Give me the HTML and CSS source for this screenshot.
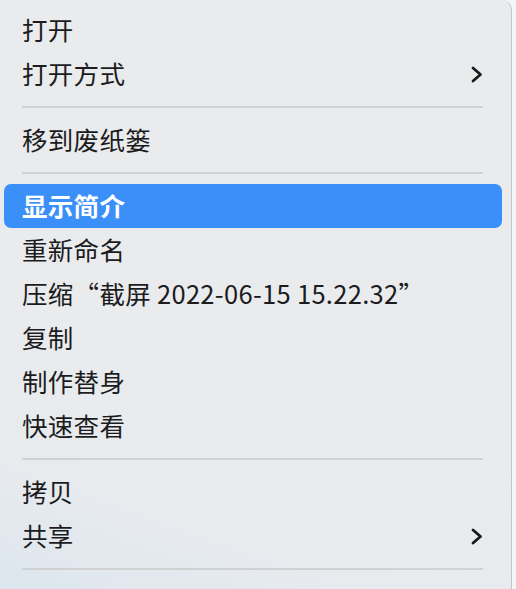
FILE: index.html
```html
<!DOCTYPE html>
<html lang="zh-CN">
<head>
<meta charset="utf-8">
<link rel="stylesheet" href="styles.css">
</head>
<body>
<div class="menu">
  <div class="item"><span class="label">打开</span></div>
  <div class="item"><span class="label">打开方式</span>
    <svg class="chev" width="12" height="17" viewBox="0 0 12 17"><path d="M2 2 L9.5 8.5 L2 15" fill="none" stroke="#1a1a1a" stroke-width="2.8" stroke-linecap="round" stroke-linejoin="round"/></svg>
  </div>
  <div class="sep"></div>
  <div class="item"><span class="label">移到废纸篓</span></div>
  <div class="sep"></div>
  <div class="item active"><span class="label">显示简介</span></div>
  <div class="item"><span class="label">重新命名</span></div>
  <div class="item"><span class="label">压缩“截屏 2022-06-15 15.22.32”</span></div>
  <div class="item"><span class="label">复制</span></div>
  <div class="item"><span class="label">制作替身</span></div>
  <div class="item"><span class="label">快速查看</span></div>
  <div class="sep"></div>
  <div class="item"><span class="label">拷贝</span></div>
  <div class="item"><span class="label">共享</span>
    <svg class="chev" width="12" height="17" viewBox="0 0 12 17"><path d="M2 2 L9.5 8.5 L2 15" fill="none" stroke="#1a1a1a" stroke-width="2.8" stroke-linecap="round" stroke-linejoin="round"/></svg>
  </div>
  <div class="sep"></div>
</div>
</body>
</html>
```
FILE: styles.css
```css
html, body {
  margin: 0;
  padding: 0;
  background: #f3f4f5;
}
body {
  width: 516px;
  height: 589px;
  overflow: hidden;
}
.menu {
  width: 512px;
  height: 589px;
  box-sizing: border-box;
  padding-top: 8px;
  background: linear-gradient(20deg, #dde6ee 0%, #e8ebee 18%, #e9ebed 40%, #e9ebed 100%);
  border-right: 1px solid #c4c6c8;
  border-top-right-radius: 10px;
  display: flex;
  flex-direction: column;
  font-family: "Noto Sans CJK SC", "Noto Sans", sans-serif;
  color: #1c1c1e;
}
.item {
  height: 44px;
  margin: 0 9px 0 4px;
  padding: 0 17px 0 18px;
  border-radius: 7px;
  display: flex;
  align-items: center;
  justify-content: space-between;
  font-size: 25.5px;
  line-height: 1;
  letter-spacing: 0.3px;
}
.label {
  white-space: nowrap;
  position: relative;
  top: -1px;
}
.item.active {
  background: #3a8ff8;
  color: #ffffff;
  font-weight: 700;
}
.chev {
  display: block;
  margin-right: 2px;
}
.sep {
  height: 22px;
  display: flex;
  align-items: center;
  padding: 0 28px 0 22px;
}
.sep::before {
  content: "";
  flex: 1;
  height: 2px;
  background: #cfd1d3;
}
```
